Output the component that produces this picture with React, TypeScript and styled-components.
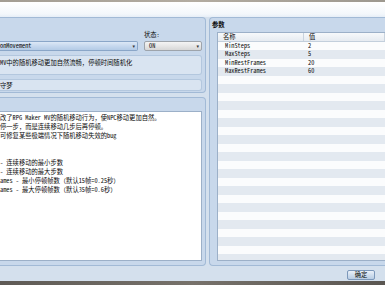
import * as React from 'react'
import styled, { createGlobalStyle } from 'styled-components'

interface Param {
  name: string,
  value: string,
}

const params: Param[] = [
  { name: 'MinSteps', value: '2' },
  { name: 'MaxSteps', value: '5' },
  { name: 'MinRestFrames', value: '20' },
  { name: 'MaxRestFrames', value: '60' },
]

const helpLines = [
  '改了RPG Maker MV的随机移动行为，使NPC移动更加自然。',
  '停一步，而是连续移动几步后再停顿。',
  '可修复某些极端情况下随机移动失效的bug',
  '',
  '',
  '- 连续移动的最小步数',
  '- 连续移动的最大步数',
  'ames - 最小停顿帧数（默认15帧=0.25秒）',
  'ames - 最大停顿帧数（默认35帧=0.6秒）',
]

const FILLER_ROWS = 26

const App: React.FC = () => (
  <>
    <GlobalStyle />
    <StyledRoot>
      <StyledTopStrip />
      <StyledTitleArea />
      <StyledMain>
        <StyledLeftColumn>
          <StyledPanel>
            <StyledPluginGrid>
              <span />
              <StyledLabel>状态:</StyledLabel>
              <StyledSelect variant="blue">
                <span>onMovement</span>
                <StyledArrow>▾</StyledArrow>
              </StyledSelect>
              <StyledSelect variant="gray">
                <span>ON</span>
                <StyledArrow>▾</StyledArrow>
              </StyledSelect>
            </StyledPluginGrid>
            <StyledInfoBox tall>MV中的随机移动更加自然流畅，停顿时间随机化</StyledInfoBox>
            <StyledInfoBox>守梦</StyledInfoBox>
          </StyledPanel>
          <StyledHelpPanel>
            <StyledHelpText>
              {helpLines.map((line, i) => (
                <StyledHelpLine key={i}>{line || '\u00a0'}</StyledHelpLine>
              ))}
            </StyledHelpText>
          </StyledHelpPanel>
        </StyledLeftColumn>
        <StyledRightPanel>
          <StyledPanelTitle>参数</StyledPanelTitle>
          <StyledTable>
            <StyledHeadRow>
              <StyledHeadCell>名称</StyledHeadCell>
              <StyledHeadCell>值</StyledHeadCell>
            </StyledHeadRow>
            {Array.from({ length: FILLER_ROWS }).map((_, i) => (
              <StyledRow key={i}>
                <StyledNameCell>{params[i]?.name ?? ''}</StyledNameCell>
                <StyledValueCell>{params[i]?.value ?? ''}</StyledValueCell>
              </StyledRow>
            ))}
          </StyledTable>
        </StyledRightPanel>
      </StyledMain>
      <StyledFooter>
        <StyledButton>确定</StyledButton>
      </StyledFooter>
      <StyledBottomStrip />
    </StyledRoot>
  </>
)

const GlobalStyle = createGlobalStyle`
  html, body {
    margin: 0;
    padding: 0;
    overflow: hidden;
    background: #d4e0ed;
  }
`

const StyledRoot = styled.div`
  width: 385px;
  height: 285px;
  display: flex;
  flex-direction: column;
  overflow: hidden;
  background: #d4e0ed;
  font-family: "Noto Sans Mono CJK SC", "Noto Sans CJK SC", monospace;
  font-size: 6.3px;
  color: #0a0a0a;
`

const StyledTopStrip = styled.div`
  height: 2px;
  flex: 0 0 auto;
  background: linear-gradient(90deg, #a39d93, #b3aca1 50%, #9d988f);
`

const StyledTitleArea = styled.div`
  height: 15px;
  flex: 0 0 auto;
  background: linear-gradient(#ffffff, #f3f7fb 80%, #e6eef7);
`

const StyledMain = styled.div`
  height: 249px;
  flex: 0 0 auto;
  display: flex;
  gap: 3px;
`

const StyledLeftColumn = styled.div`
  width: 206px;
  flex: 0 0 auto;
  display: flex;
  flex-direction: column;
  gap: 4px;
`

const StyledPanel = styled.div`
  height: 76px;
  box-sizing: border-box;
  flex: 0 0 auto;
  display: flex;
  flex-direction: column;
  gap: 4px;
  padding: 13px 3px 0 0;
  background: #c8d8eb;
  border: 1px solid #a2bad6;
  border-left: none;
  border-radius: 0 4px 4px 0;
`

const StyledPluginGrid = styled.div`
  display: grid;
  grid-template-columns: 1fr 58px;
  column-gap: 6px;
  row-gap: 2px;
  align-items: end;
`

const StyledLabel = styled.span`
  line-height: 8px;
`

const StyledSelect = styled.div<{ variant: 'blue' | 'gray' }>`
  height: 10px;
  box-sizing: border-box;
  display: flex;
  align-items: center;
  justify-content: space-between;
  padding: 0 2px 0 ${props => (props.variant === 'gray' ? '4px' : '0')};
  border: 1px solid ${props => (props.variant === 'gray' ? '#9ea4ab' : '#8aa6c8')};
  border-left-width: ${props => (props.variant === 'gray' ? '1px' : '0')};
  border-radius: ${props => (props.variant === 'gray' ? '2px' : '0 2px 2px 0')};
  background: ${props => (props.variant === 'gray'
    ? 'linear-gradient(#f4f4f4, #e6e6e6 50%, #d7d7d7)'
    : 'linear-gradient(#dce8f6, #c6d8ee 50%, #b4cbe6)')};
  line-height: 8px;
`

const StyledArrow = styled.span`
  font-family: "DejaVu Sans", sans-serif;
  font-size: 5px;
  color: #333333;
`

const StyledInfoBox = styled.div<{ tall?: boolean }>`
  height: ${props => (props.tall ? '20px' : '12px')};
  box-sizing: border-box;
  padding: ${props => (props.tall ? '3px' : '2px')} 0 0 0;
  background: #d9e4f1;
  border: 1px solid #b3c7de;
  border-left: none;
  border-radius: 0 3px 3px 0;
  line-height: 8px;
  white-space: nowrap;
`

const StyledHelpPanel = styled.div`
  flex: 1 1 auto;
  box-sizing: border-box;
  display: flex;
  flex-direction: column;
  padding: 13px 3px 4px 0;
  background: #c8d8eb;
  border: 1px solid #a2bad6;
  border-left: none;
  border-radius: 0 4px 4px 0;
`

const StyledHelpText = styled.div`
  flex: 1 1 auto;
  padding-top: 1px;
  background: #ffffff;
  border: 1px solid #9cb0c8;
  border-left: none;
`

const StyledHelpLine = styled.div`
  height: 9px;
  line-height: 9px;
  white-space: nowrap;
`

const StyledRightPanel = styled.div`
  flex: 1 1 auto;
  box-sizing: border-box;
  display: flex;
  flex-direction: column;
  padding: 2px 0 4px 7px;
  background: #c8d8eb;
  border: 1px solid #a2bad6;
  border-right: none;
  border-radius: 4px 0 0 4px;
  overflow: hidden;
`

const StyledPanelTitle = styled.div`
  height: 12px;
  line-height: 10px;
  margin-left: -5px;
  font-weight: bold;
`

const StyledTable = styled.div`
  flex: 1 1 auto;
  overflow: hidden;
  background: #ffffff;
  border: 1px solid #9cb0c8;
  border-right: none;
`

const StyledHeadRow = styled.div`
  display: grid;
  grid-template-columns: 86px 1fr;
  height: 8px;
  background: linear-gradient(#f7f9fb, #e6ebf1);
  border-bottom: 1px solid #c3cfdc;
`

const StyledHeadCell = styled.div`
  line-height: 8px;
  padding-left: 5px;
  border-right: 1px solid #c9d3de;
`

const StyledRow = styled.div`
  display: grid;
  grid-template-columns: 86px 1fr;
  height: 8.5px;
  background: #fbfcfd;

  &:nth-child(odd) {
    background: #e3e9f0;
  }
`

const StyledNameCell = styled.div`
  line-height: 8.5px;
  padding-left: 7px;
`

const StyledValueCell = styled.div`
  line-height: 8.5px;
  padding-left: 4px;
`

const StyledFooter = styled.div`
  height: 15px;
  box-sizing: border-box;
  flex: 0 0 auto;
  display: flex;
  align-items: flex-start;
  justify-content: flex-end;
  padding: 4px 10px 0 0;
`

const StyledButton = styled.button`
  width: 28px;
  height: 10px;
  padding: 0;
  font-family: inherit;
  font-size: 6.3px;
  line-height: 8px;
  color: #0a0a0a;
  background: linear-gradient(#eaf1f9, #d0deee 50%, #b8cce3);
  border: 1px solid #7c98ba;
  border-radius: 2px;
`

const StyledBottomStrip = styled.div`
  flex: 1 1 auto;
  background: linear-gradient(90deg, #5e5a55, #77726b 50%, #5a5651);
`

export default App
